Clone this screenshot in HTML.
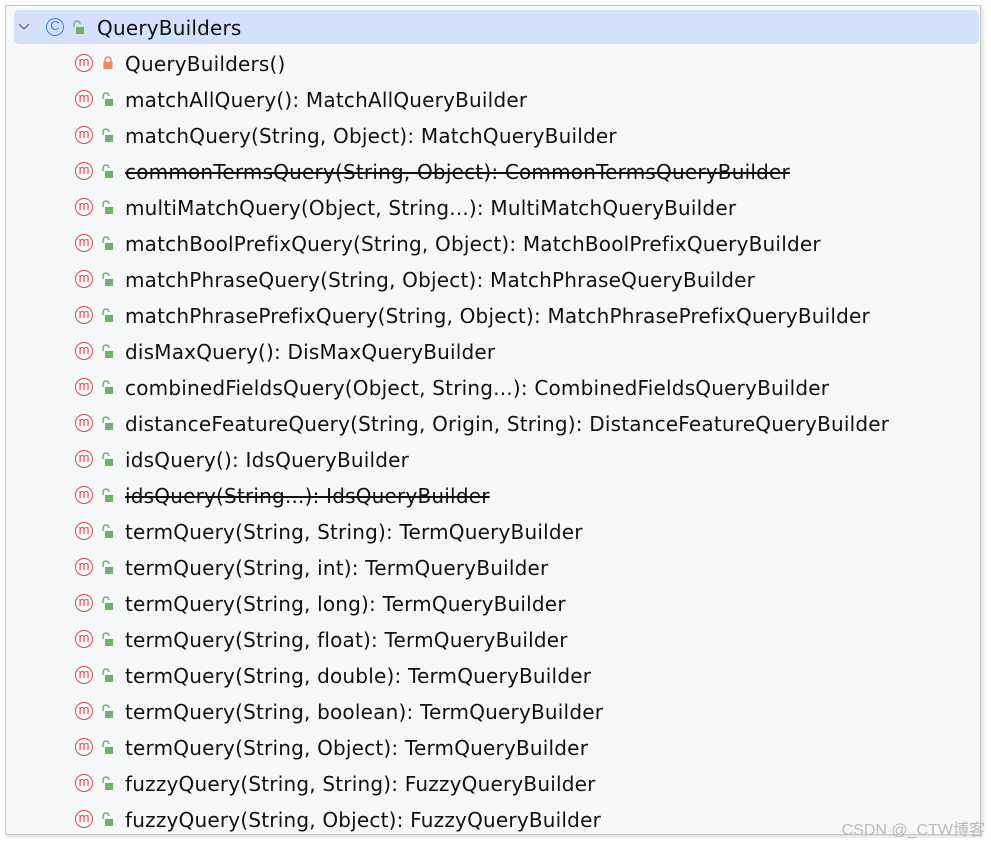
<!DOCTYPE html>
<html><head><style>
body{margin:0;width:991px;height:846px;background:#fff;position:relative;overflow:hidden;font-family:"DejaVu Sans",sans-serif}
.frame{position:absolute;left:5px;top:5px;width:974px;height:828px;border:1px solid #c8c8c8;background:#f7f8fa;box-shadow:2px 2px 3px #ddd}
.hdr{position:absolute;left:8px;top:4px;width:965px;height:34px;background:#d5e1fb;border-radius:5px}
.row{position:absolute;height:36px;line-height:36px;font-size:20px;letter-spacing:0.2px;color:#111;white-space:nowrap}
.s{text-decoration:line-through}
.m{position:absolute;width:16px;height:16px;border:1.6px solid #e0474f;border-radius:50%;color:#e0474f;font-size:13px;line-height:14px;text-align:center;font-family:"Liberation Sans",sans-serif}
.c{border-color:#3f7ff0;color:#3f7ff0}
.lk{position:absolute}
.wm{position:absolute;right:6px;bottom:6px;font-size:16px;color:#bbb;font-family:"Liberation Sans","Noto Sans CJK SC",sans-serif}
</style></head><body>
<div class="frame"><div class="hdr"></div></div>
<svg style="position:absolute;left:18px;top:23px" width="12" height="8"><path d="M1 1L6 6L11 1" stroke="#777" stroke-width="1.5" fill="none"/></svg>
<div class="m c" style="left:46px;top:18px">C</div>
<svg class="lk" style="left:71px;top:20px" width="14" height="14"><path d="M3 7V4a3 3 0 0 1 6 0" stroke="#6db26b" stroke-width="1.5" fill="none"/><rect x="5" y="7" width="8" height="7" fill="#6db26b"/></svg>
<div class="row" style="left:97px;top:10px">QueryBuilders</div>
<div id="list"></div>
<div class="wm">CSDN @_CTW博客</div>
<script>
var r=[["QueryBuilders()",0,1],["matchAllQuery(): MatchAllQueryBuilder"],["matchQuery(String, Object): MatchQueryBuilder"],["commonTermsQuery(String, Object): CommonTermsQueryBuilder",1],["multiMatchQuery(Object, String...): MultiMatchQueryBuilder"],["matchBoolPrefixQuery(String, Object): MatchBoolPrefixQueryBuilder"],["matchPhraseQuery(String, Object): MatchPhraseQueryBuilder"],["matchPhrasePrefixQuery(String, Object): MatchPhrasePrefixQueryBuilder"],["disMaxQuery(): DisMaxQueryBuilder"],["combinedFieldsQuery(Object, String...): CombinedFieldsQueryBuilder"],["distanceFeatureQuery(String, Origin, String): DistanceFeatureQueryBuilder"],["idsQuery(): IdsQueryBuilder"],["idsQuery(String...): IdsQueryBuilder",1],["termQuery(String, String): TermQueryBuilder"],["termQuery(String, int): TermQueryBuilder"],["termQuery(String, long): TermQueryBuilder"],["termQuery(String, float): TermQueryBuilder"],["termQuery(String, double): TermQueryBuilder"],["termQuery(String, boolean): TermQueryBuilder"],["termQuery(String, Object): TermQueryBuilder"],["fuzzyQuery(String, String): FuzzyQueryBuilder"],["fuzzyQuery(String, Object): FuzzyQueryBuilder"]];
var h="";r.forEach(function(e,i){var cy=64+36*i;
h+='<div class="m" style="left:75px;top:'+(cy-10)+'px">m</div>';
if(e[2])h+='<svg class="lk" style="left:102px;top:'+(cy-8)+'px" width="12" height="13"><path d="M3 6V4a3 3 0 0 1 6 0V6" stroke="#f08a5d" stroke-width="1.6" fill="none"/><rect x="1.5" y="6" width="9" height="7" fill="#f08a5d"/></svg>';
else h+='<svg class="lk" style="left:100px;top:'+(cy-8)+'px" width="14" height="14"><path d="M3 7V4a3 3 0 0 1 6 0" stroke="#6db26b" stroke-width="1.5" fill="none"/><rect x="5" y="7" width="8" height="7" fill="#6db26b"/></svg>';
h+='<div class="row'+(e[1]?' s':'')+'" style="left:125px;top:'+(cy-18)+'px">'+e[0]+'</div>';});
document.getElementById("list").innerHTML=h;
</script>
</body></html>
